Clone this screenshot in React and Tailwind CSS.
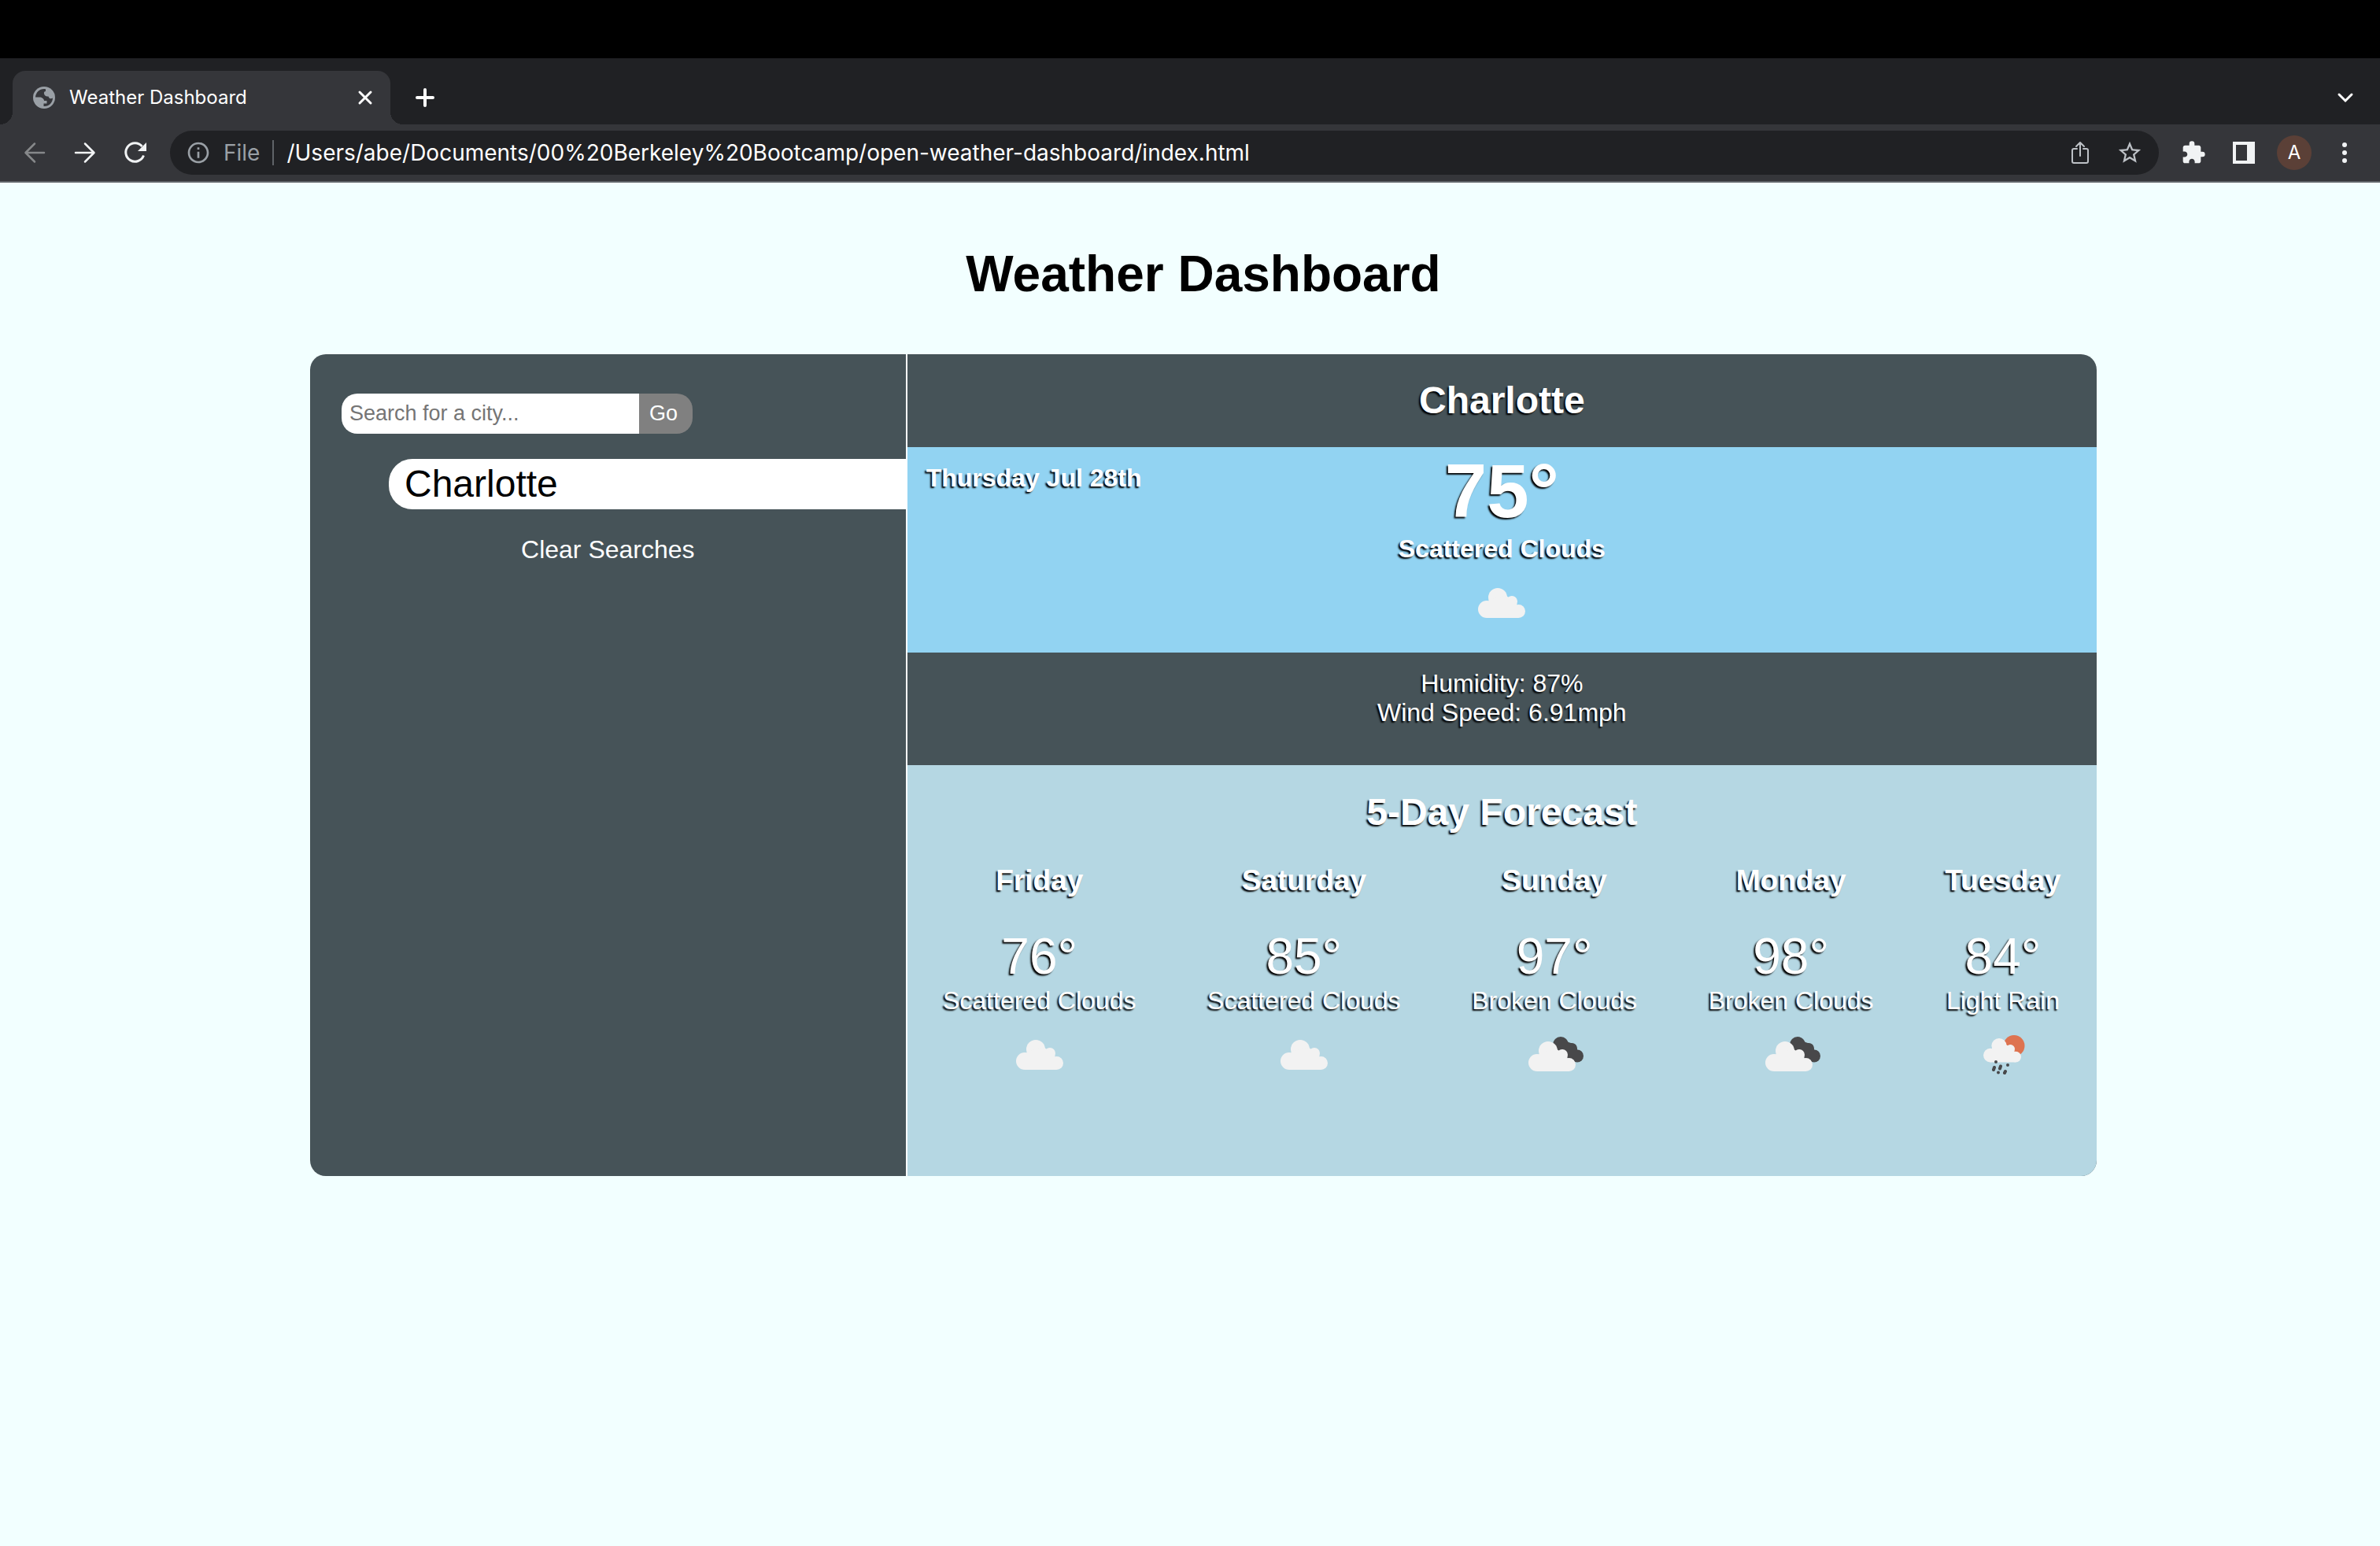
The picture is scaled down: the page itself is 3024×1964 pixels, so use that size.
import React from "react";
import { MdExtension, MdOutlineInfo, MdStarBorder } from "react-icons/md";

const SHADOW = "[text-shadow:-2px_2px_2px_#000]";

const DAYS = [
  { day: "Friday", temp: 76, text: "Scattered Clouds", icon: "cloud" },
  { day: "Saturday", temp: 85, text: "Scattered Clouds", icon: "cloud" },
  { day: "Sunday", temp: 97, text: "Broken Clouds", icon: "broken" },
  { day: "Monday", temp: 98, text: "Broken Clouds", icon: "broken" },
  { day: "Tuesday", temp: 84, text: "Light Rain", icon: "rain" },
];

function Cloud({ transform }) {
  return (
    <g transform={transform} fill="#f2f2f2">
      <circle cx="11" cy="27" r="11" />
      <circle cx="25" cy="12" r="12" />
      <circle cx="43" cy="17" r="7" />
      <circle cx="51.5" cy="29.5" r="8.5" />
      <path d="M11 38V20L15 14L36 10L49 18L51.5 38Z" />
    </g>
  );
}

function WeatherIcon({ kind }) {
  return (
    <svg viewBox="0 0 100 100" className="size-[100px]" aria-hidden="true">
      {kind === "cloud" && <Cloud transform="translate(20 31)" />}
      {kind === "broken" && (
        <>
          <g fill="#48484a">
            <circle cx="58" cy="37" r="10" />
            <circle cx="72" cy="42" r="7" />
            <circle cx="79" cy="51.5" r="8" />
            <path d="M50 42L62 32L77 37L84 58L72 58Z" />
          </g>
          <Cloud transform="translate(17 33)" />
        </>
      )}
      {kind === "rain" && (
        <>
          <circle cx="64" cy="38.5" r="13.5" fill="#de7350" />
          <Cloud transform="translate(25 29) scale(0.8)" />
          <g fill="none" stroke="#48484a" strokeWidth="4" strokeLinecap="round">
            <path d="M41 59v.1M39 66l-1 3M47 64.500l-1 3M56 63v.1M44 72.500v.1M53 71l-1 2" />
          </g>
        </>
      )}
    </svg>
  );
}

function TabStrip() {
  return (
    <div className="flex h-[84px] items-end bg-[#202124] px-4">
      <div className="relative flex h-[68px] w-[480px] items-center rounded-t-2xl bg-[#35363a] pl-[26px] pr-5 text-white">
        <span className="absolute bottom-0 right-full size-4 bg-[radial-gradient(circle_at_top_left,#202124_16px,#35363a_16px)]" />
        <span className="absolute bottom-0 left-full size-4 bg-[radial-gradient(circle_at_top_right,#202124_16px,#35363a_16px)]" />
        <svg viewBox="0 0 28 28" className="size-7" aria-hidden="true">
          <circle cx="14" cy="14" r="14" fill="#9aa0a6" />
          <path
            fill="#35363a"
            d="M16 3.200C9 2 3.500 7 3 13.500H8.500C11 13.500 13.500 15 13.500 18H17V21H13.500V25C20 25.500 25 20.500 25 14.500C23 16 20.500 15.500 19.500 12.500C17.500 12.500 14.500 12 14 9C13.500 7 14.500 6 16 6Z"
          />
          <path
            fill="#9aa0a6"
            d="M8 14.500C12 14 14 16 14 18H17.500V21.500H13L12 17.500L8 15Z"
          />
        </svg>
        <span className="ml-[18px] flex-1 text-[24px]">Weather Dashboard</span>
        <button aria-label="Close tab">
          <svg viewBox="0 0 24 24" className="size-6" stroke="currentColor" strokeWidth="3" strokeLinecap="round">
            <path d="M5 5l14 14M19 5L5 19" />
          </svg>
        </button>
      </div>
      <button aria-label="New tab" className="mb-[22px] ml-8 text-white">
        <svg viewBox="0 0 24 24" className="size-6" stroke="currentColor" strokeWidth="4" strokeLinecap="round">
          <path d="M12 2v20M2 12h20" />
        </svg>
      </button>
      <button aria-label="Search tabs" className="mb-[22px] ml-auto mr-4 text-white">
        <svg viewBox="0 0 24 24" className="size-6" fill="none" stroke="currentColor" strokeWidth="3" strokeLinecap="round">
          <path d="M4 8l8 8 8-8" />
        </svg>
      </button>
    </div>
  );
}

function Toolbar() {
  return (
    <div className="flex h-[74px] items-center border-b-2 border-[#5f6368] bg-[#35363a] pl-7 pr-[41px] text-[#f1f3f4]">
      <div className="flex gap-8">
        <button aria-label="Back" className="text-[#86888a]">
          <svg viewBox="0 0 32 32" className="size-8" fill="none" stroke="currentColor" strokeWidth="2.500" strokeLinecap="round" strokeLinejoin="round">
            <path d="M28 16H5M16 4.500L4.500 16L16 27.500" />
          </svg>
        </button>
        <button aria-label="Forward">
          <svg viewBox="0 0 32 32" className="size-8" fill="none" stroke="currentColor" strokeWidth="2.500" strokeLinecap="round" strokeLinejoin="round">
            <path d="M4 16h23M16 4.500L27.500 16L16 27.500" />
          </svg>
        </button>
        <button aria-label="Reload">
          <svg viewBox="0 0 32 32" className="size-8" fill="none">
            <path d="M26.500 19.500A11.700 11.700 0 1 1 24.500 8" stroke="currentColor" strokeWidth="3" />
            <path d="M30 3V14H19Z" fill="currentColor" />
          </svg>
        </button>
      </div>
      <div className="ml-7 flex h-14 flex-1 items-center rounded-full bg-[#202124] px-5 text-[28px]">
        <MdOutlineInfo className="size-8 text-[#9aa0a6]" />
        <span className="ml-4 text-[#9aa0a6]">File</span>
        <span className="ml-4 h-8 w-[2px] bg-[#5f6368]" />
        <input
          aria-label="Address"
          defaultValue="/Users/abe/Documents/00%20Berkeley%20Bootcamp/open-weather-dashboard/index.html"
          className="ml-4 min-w-0 flex-1 bg-transparent text-white outline-none"
        />
        <button aria-label="Share" className="text-[#bdc1c6]">
          <svg viewBox="0 0 32 32" className="size-8" fill="none" stroke="currentColor" strokeWidth="2" strokeLinecap="round" strokeLinejoin="round">
            <path d="M12 11H8a2 2 0 0 0-2 2v14a2 2 0 0 0 2 2h16a2 2 0 0 0 2-2V13a2 2 0 0 0-2-2h-4M16 20V3M11 8l5-5 5 5" />
          </svg>
        </button>
        <button aria-label="Bookmark" className="ml-[30px] text-[#bdc1c6]"><MdStarBorder className="size-[34px]" /></button>
      </div>
      <button aria-label="Extensions" className="ml-7"><MdExtension className="size-8" /></button>
      <button aria-label="Side panel" className="ml-[34px]">
        <svg viewBox="0 0 28 28" className="size-7"><path fill="currentColor" fillRule="evenodd" d="M0 0h28v28H0zM4 4v20h14V4z" /></svg>
      </button>
      <button aria-label="Profile" className="ml-7 size-11 rounded-full bg-[#5b4037] text-[24px] text-white">A</button>
      <button aria-label="Menu" className="ml-[38px]">
        <svg viewBox="0 0 8 28" className="h-7 w-2" fill="currentColor">
          <circle cx="4" cy="4" r="3" />
          <circle cx="4" cy="14" r="3" />
          <circle cx="4" cy="24" r="3" />
        </svg>
      </button>
    </div>
  );
}

function Sidebar() {
  return (
    <aside className="w-1/3 bg-[#465358] pt-[50px]">
      <form className="ml-10 flex h-[51px] text-[27px]" onSubmit={(e) => e.preventDefault()}>
        <input
          aria-label="Search for a city"
          placeholder="Search for a city..."
          className="w-[378px] rounded-l-[20px] bg-white px-[10px] text-black outline-none placeholder:text-[#757575]"
        />
        <button className="w-[68px] rounded-r-[20px] bg-[#808080] pr-[6px] text-white">Go</button>
      </form>
      <button className="ml-[100px] mt-8 block h-16 w-[calc(100%-100px)] rounded-l-[30px] bg-white pl-5 text-left text-[48px] leading-[64px] text-black">
        Charlotte
      </button>
      <button className="mx-auto mt-8 block text-[32px] leading-[38px] text-white">Clear Searches</button>
    </aside>
  );
}

export default function App() {
  return (
    <div className="min-h-screen bg-[#f2ffff] font-['Liberation_Sans',Arial,sans-serif]">
      <div className="h-[74px] bg-black" />
      <header className="font-[Inter,sans-serif]">
        <TabStrip />
        <Toolbar />
      </header>
      <main className="ml-[394px] mr-[360px] pt-[78px]">
        <h1 className="text-center text-[64px] font-bold leading-[76px] text-black">Weather Dashboard</h1>
        <div className="mt-16 flex overflow-hidden rounded-[20px]">
          <Sidebar />
          <section className={`flex-1 border-l-2 border-white bg-[#465358] text-center text-[32px] leading-[37px] text-white ${SHADOW}`}>
            <h2 className="h-[118px] pt-[31px] text-[48px] font-bold leading-[56px]">Charlotte</h2>
            <div className="grid h-[261px] grid-cols-3 bg-[#92d3f2] font-bold">
              <p className="pl-6 pt-[21px] text-left">Thursday Jul 28th</p>
              <div className="flex flex-col items-center">
                <p className="text-[96px] leading-[111px]">75°</p>
                <p>Scattered Clouds</p>
                <WeatherIcon kind="cloud" />
              </div>
            </div>
            <div className="h-[143px] pt-[21px]">
              <p>Humidity: 87%</p>
              <p>Wind Speed: 6.91mph</p>
            </div>
            <div className="h-[522px] bg-[#b5d7e3] pt-8">
              <h2 className="text-[48px] font-bold leading-[56px]">5-Day Forecast</h2>
              <div className="mt-[37px] flex justify-around">
                {DAYS.map((d) => (
                  <div key={d.day} className="flex flex-col items-center">
                    <h3 className="text-[37px] font-bold leading-[44px]">{d.day}</h3>
                    <p className="mt-[37px] text-[64px] leading-[75px]">{d.temp}°</p>
                    <p>{d.text}</p>
                    <WeatherIcon kind={d.icon} />
                  </div>
                ))}
              </div>
            </div>
          </section>
        </div>
      </main>
    </div>
  );
}
